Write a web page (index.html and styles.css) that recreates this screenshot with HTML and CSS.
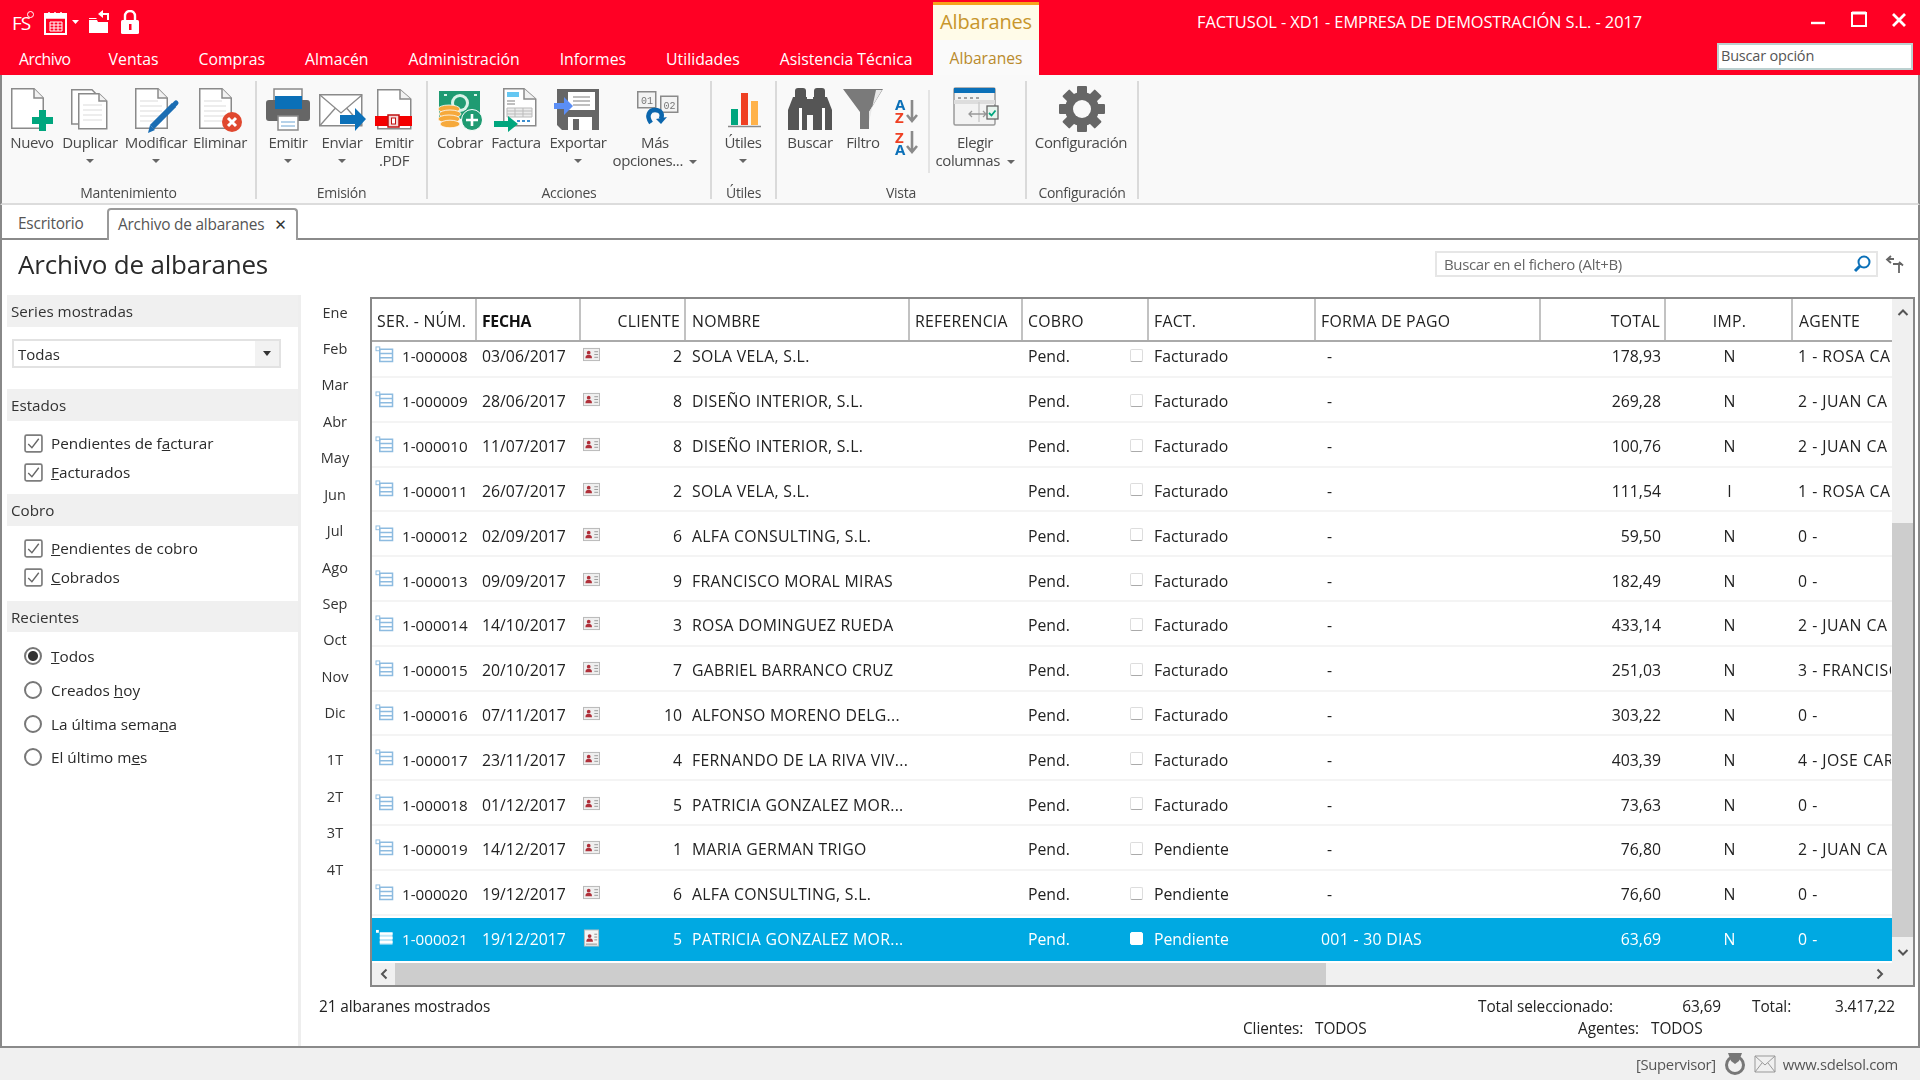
FILE: index.html
```html
<!DOCTYPE html>
<html lang="es">
<head>
<meta charset="utf-8">
<title>FACTUSOL</title>
<link rel="stylesheet" href="styles.css">
</head>
<body>
<svg class="defs" width="0" height="0">
  <symbol id="rowlist" viewBox="0 0 20 18"><rect x="1" y="1" width="4" height="4" fill="#fff" stroke="#8dbbe0"/><path d="M5 3.5h13.5v13H5z M5 8h13.5 M5 12.5h13.5" fill="none" stroke="#8dbbe0" stroke-width="1.6"/></symbol>
  <symbol id="rowlistw" viewBox="0 0 20 18"><rect x="1" y="1" width="3" height="3" fill="#fff"/><path d="M5 3.5h13.5v13H5z" fill="#bfe6f7"/><path d="M5 5h13.5M5 9.5h13.5M5 14h13.5" stroke="#fff" stroke-width="2.4"/></symbol>
  <symbol id="card" viewBox="0 0 18 16"><rect x=".5" y="1.5" width="17" height="13" fill="#efefef" stroke="#b5b5b5"/><circle cx="6" cy="6" r="2" fill="#b0303a"/><path d="M2.5 12c0-3 1.500-3.500 3.500-3.500s3.500 .5 3.500 3.500z" fill="#b0303a"/><path d="M12 5h4M12 8h4M12 11h4" stroke="#999"/></symbol>
  <symbol id="cardw" viewBox="0 0 18 18"><rect x="1.500" y=".5" width="15" height="17" fill="#f4f4f4" stroke="#bbb"/><circle cx="7" cy="7" r="2" fill="#b0303a"/><path d="M3.500 13c0-3 1.500-3.500 3.500-3.500s3.500 .5 3.500 3.500z" fill="#b0303a"/><path d="M12 5h3M12 8h3M12 11h3M3 15.500h12" stroke="#888"/></symbol>
  <symbol id="check" viewBox="0 0 18 18"><rect x="1" y="1" width="16" height="16" rx="1.500" fill="#fff" stroke="#7d7d7d" stroke-width="1.600"/><path d="M4 9.500l3.500 3.500 6.500-8.500" fill="none" stroke="#666" stroke-width="1.300"/></symbol>
  <symbol id="docp" viewBox="0 0 60 48"><path d="M9.750 2.750H32L41.250 12V42.250H9.750z" fill="#fff" stroke="#8a8a8a" stroke-width="1.500"/><path d="M32 2.750V12H41.250" fill="#f2f2f2" stroke="#8a8a8a" stroke-width="1.500"/></symbol>
  <symbol id="lines" viewBox="0 0 60 48"><path d="M14 15h18M14 20h22M14 25h22M14 30h22M14 35h22" stroke="#dcdcdc" stroke-width="1.200"/></symbol>
</svg>

<div class="app">
  <header class="head">
    <div class="titlebar">
      <div class="quick">
        <span class="fs">FS</span>
        <svg class="qi-cal" width="36" height="24" viewBox="0 0 36 24"><path d="M2 3h21v20H2z" fill="none" stroke="#fff" stroke-width="2"/><path d="M2 3h21v4H2z M6 1v4M12 1v4M18 1v4" fill="#fff" stroke="#fff" stroke-width="1.500"/><path d="M7 11h12v9H7z M7 14h12M7 17h12M11 11v9M15 11v9" fill="none" stroke="#fff"/><path d="M29 9h7l-3.500 4z" fill="#fff"/></svg>
        <svg class="qi-folder" width="24" height="24" viewBox="0 0 24 24"><path d="M1 10h8l1 2h10v11H1z" fill="#fff"/><path d="M1 8h7l1 1H1z" fill="#fff"/><path d="M20 10V4h-7" fill="none" stroke="#fff" stroke-width="2"/><path d="M15 0v8l-5-4z" fill="#fff"/></svg>
        <svg class="qi-lock" width="18" height="24" viewBox="0 0 18 24"><path d="M4 11V6a5 5 0 0 1 10 0v5" fill="none" stroke="#fff" stroke-width="2.400"/><rect x="0" y="10" width="18" height="14" rx="1.500" fill="#fff"/><rect x="8" y="14" width="2.500" height="6" fill="#ff0024"/></svg>
      </div>
      <div class="ctx-title">Albaranes</div>
      <div class="apptitle">FACTUSOL - XD1 - EMPRESA DE DEMOSTRACIÓN S.L. - 2017</div>
      <div class="winbtns">
        <svg width="96" height="20" viewBox="0 0 96 20"><path d="M0 13h14" stroke="#fff" stroke-width="2.400"/><path d="M41 3h14v13H41z" fill="none" stroke="#fff" stroke-width="2"/><path d="M41 3h14" stroke="#fff" stroke-width="3"/><path d="M82 4l12 12M94 4L82 16" stroke="#fff" stroke-width="2.800"/></svg>
      </div>
    </div>
    <div class="menubar">
      <div class="menu-items">
        <span class="mi mi-first">Archivo</span>
        <span class="mi">Ventas</span>
        <span class="mi">Compras</span>
        <span class="mi">Almacén</span>
        <span class="mi">Administración</span>
        <span class="mi">Informes</span>
        <span class="mi">Utilidades</span>
        <span class="mi">Asistencia Técnica</span>
      </div>
      <span class="mi-ctx">Albaranes</span>
      <span class="menu-search">Buscar opción</span>
    </div>
  </header>

  <section class="ribbon">
    <div class="group g1">
      <div class="btns">
        <div class="rb w56"><svg class="ri" viewBox="0 0 60 48"><use href="#docp"/><path d="M37 24h7v7h7v7h-7v7h-7v-7h-7v-7h7z" fill="#00a67e"/></svg><span class="rl">Nuevo</span></div>
        <div class="rb w60"><svg class="ri" viewBox="0 0 60 48"><path d="M11.750 3.750H32L39 11V38H11.750z" fill="#fff" stroke="#8a8a8a" stroke-width="1.500"/><path d="M18.750 7.750H39L46.750 15V42.750H18.750z" fill="#fff" stroke="#8a8a8a" stroke-width="1.500"/><path d="M39 7.750V15H46.750" fill="#f2f2f2" stroke="#8a8a8a" stroke-width="1.500"/><path d="M23 19h19M23 24h19M23 29h19M23 34h19" stroke="#dcdcdc" stroke-width="1.200"/></svg><span class="rl">Duplicar</span><span class="caret"></span></div>
        <div class="rb w72"><svg class="ri" viewBox="0 0 60 48"><use href="#docp"/><use href="#lines"/><path d="M26 41L48 19" stroke="#1a6db3" stroke-width="6"/><path d="M48 19l2-2" stroke="#1a6db3" stroke-width="5" stroke-linecap="round"/><path d="M22 47l2-8 5 5z" fill="#1a6db3"/></svg><span class="rl">Modificar</span><span class="caret"></span></div>
        <div class="rb w56"><svg class="ri" viewBox="0 0 60 48"><use href="#docp"/><use href="#lines"/><circle cx="42" cy="36" r="10" fill="#e0482f"/><path d="M38 32l8 8M46 32l-8 8" stroke="#fff" stroke-width="3"/></svg><span class="rl">Eliminar</span></div>
      </div>
      <div class="glabel">Mantenimiento</div>
    </div>
    <div class="group g2">
      <div class="btns">
        <div class="rb w52"><svg class="ri" viewBox="0 0 60 48"><path d="M16 3h28v12H16z" fill="#fff" stroke="#8a8a8a" stroke-width="1.500"/><path d="M8 17a3 3 0 0 1 3-3h38a3 3 0 0 1 3 3v15a3 3 0 0 1-3 3H11a3 3 0 0 1-3-3z" fill="#666"/><path d="M17 10h27v13H17z" fill="#0b70b8"/><path d="M20 30h20v14H20z" fill="#fff" stroke="#8a8a8a" stroke-width="1.500"/><path d="M23 36h14M23 40h14" stroke="#9fc4e2" stroke-width="1.500"/></svg><span class="rl">Emitir</span><span class="caret"></span></div>
        <div class="rb w56"><svg class="ri" viewBox="0 0 60 48"><path d="M7.750 8.750h42v31h-42z" fill="#fff" stroke="#8a8a8a" stroke-width="1.500"/><path d="M8 9l21 18L50 9M8 39.500l15-17M50 39.500l-15-17" fill="none" stroke="#8a8a8a" stroke-width="1.300"/><path d="M28 29h15v-7l11 11-11 12v-7H28z" fill="#0b70b8"/></svg><span class="rl">Enviar</span><span class="caret"></span></div>
        <div class="rb w48"><svg class="ri" viewBox="0 0 60 48"><path d="M13.750 3.750H36L46.750 13V42.750H13.750z" fill="#fff" stroke="#8a8a8a" stroke-width="1.500"/><path d="M36 3.750V13H46.750" fill="#f2f2f2" stroke="#8a8a8a" stroke-width="1.500"/><path d="M11 30h37v10H11z" fill="#f40000"/><rect x="24" y="29" width="11" height="12" fill="#f5d5d5" stroke="#c01010" stroke-width="1.500"/><rect x="27.500" y="32" width="4" height="6" fill="#fff" stroke="#c01010"/></svg><span class="rl">Emitir<br>.PDF</span></div>
      </div>
      <div class="glabel">Emisión</div>
    </div>
    <div class="group g3">
      <div class="btns">
        <div class="rb w52"><svg class="ri" viewBox="0 0 60 48"><path d="M9 5h41v28H9z" fill="#1f9b72"/><circle cx="30" cy="17" r="9" fill="#d9f2e8"/><circle cx="30" cy="17" r="6" fill="#1f9b72"/><path d="M14 9l3 0M47 9l-3 0" stroke="#d9f2e8" stroke-width="2"/><g fill="#f6a93b" stroke="#fff" stroke-width=".8"><ellipse cx="19" cy="23" rx="11" ry="4"/><ellipse cx="20" cy="28" rx="11" ry="4"/><ellipse cx="19" cy="33" rx="11" ry="4"/><ellipse cx="20" cy="38" rx="10" ry="3.800"/></g><circle cx="42" cy="34" r="10.500" fill="#1f9b72" stroke="#fff"/><path d="M36 34h12M42 28v12" stroke="#fff" stroke-width="2.600"/></svg><span class="rl">Cobrar</span></div>
        <div class="rb w60"><svg class="ri" viewBox="0 0 60 48"><path d="M17.750 2.750H38L49.750 13V39.750H17.750z" fill="#fff" stroke="#8a8a8a" stroke-width="1.500"/><path d="M38 2.750V13H49.750" fill="#f2f2f2" stroke="#8a8a8a" stroke-width="1.500"/><path d="M21 6h12v5H21z" fill="#65c7f2"/><path d="M21 15h8M21 18h8" stroke="#aaa" stroke-width="1.300"/><path d="M21 22h25v9H21z" fill="#ececec" stroke="#bbb"/><path d="M21 25h25M21 28h25M29 22v9M37 22v9" stroke="#bbb"/><path d="M31 35h15" stroke="#3d8fd0" stroke-width="2" stroke-dasharray="3 2"/><path d="M8 38h14v-5l10 8-10 8v-5H8z" fill="#00a67e" transform="translate(0 -3)"/></svg><span class="rl">Factura</span></div>
        <div class="rb w64"><svg class="ri" viewBox="0 0 60 48"><path d="M9 3h42v41H14l-5-5z" fill="#666"/><path d="M20 6h27v18H20z" fill="#fff"/><path d="M25 11h17M25 15h17M25 19h17" stroke="#aaa" stroke-width="1.300"/><path d="M20 31h24v13H20z" fill="#fff"/><path d="M25 33h6v11h-6z" fill="#666"/><path d="M6 17h10v-6l9 9-9 9v-6H6z" fill="#5b8ef5"/></svg><span class="rl">Exportar</span><span class="caret"></span></div>
        <div class="rb w90"><svg class="ri" viewBox="0 0 60 48"><rect x="12.750" y="5.750" width="18" height="16" fill="#f3f3f3" stroke="#8a8a8a" stroke-width="1.500"/><text class="mono" x="16" y="18">01</text><rect x="35.750" y="10.250" width="17" height="16" fill="#f3f3f3" stroke="#8a8a8a" stroke-width="1.500"/><text class="mono" x="38.500" y="23">02</text><path d="M26 37c-5-7-2-13 4-13s8 4 6 9" fill="none" stroke="#0b66ad" stroke-width="4.500"/><path d="M31 33l5 5 6-7z" fill="#0b66ad"/></svg><span class="rl">Más<br>opciones... <span class="caret-in"></span></span></div>
      </div>
      <div class="glabel">Acciones</div>
    </div>
    <div class="group g4">
      <div class="btns">
        <div class="rb w46"><svg class="ri" viewBox="0 0 60 48"><path d="M18 23h7v16h-7z" fill="#00a67e"/><path d="M28 7h7v32h-7z" fill="#ef4023"/><path d="M38 15h7v24h-7z" fill="#ffb24a"/><path d="M15 40.500h33" stroke="#8a8a8a" stroke-width="1.500"/></svg><span class="rl">Útiles</span><span class="caret"></span></div>
      </div>
      <div class="glabel">Útiles</div>
    </div>
    <div class="group g5">
      <div class="btns">
        <div class="rb w52"><svg class="ri" viewBox="0 0 60 48"><g fill="#555"><rect x="15" y="2" width="11" height="14" rx="3"/><rect x="34" y="2" width="11" height="14" rx="3"/><path d="M13 11h14v33H8V24z"/><path d="M33 11h14l5 13v20H33z"/><path d="M27 13h6v16h-6z"/></g><path d="M19 22h3v22h-3zM42 22h3v22h-3z" fill="#fff"/></svg><span class="rl">Buscar</span></div>
        <div class="rb w54"><svg class="ri" viewBox="0 0 60 48"><path d="M10 3h40L36 26v17h-9V26z" fill="#7a7a7a"/><path d="M43 4h6L36 26v10z" fill="#e8e8e8"/></svg><span class="rl">Filtro</span></div>
        <div class="rb w30 az"><svg width="30" height="68" viewBox="0 0 30 68"><text class="azb" x="5" y="28">A</text><text class="azr" x="5" y="41">Z</text><path d="M22 18v21M17 33l5 6 5-6" fill="none" stroke="#8a8a8a" stroke-width="2.600"/><text class="azr" x="5" y="61">Z</text><text class="azb" x="5" y="73">A</text><path d="M22 49v21M17 64l5 6 5-6" fill="none" stroke="#8a8a8a" stroke-width="2.600"/></svg></div>
        <div class="rdiv"></div>
        <div class="rb w78"><svg class="ri" viewBox="0 0 60 48"><rect x="9" y="2" width="41" height="37" rx="1.500" fill="#f3f3f3" stroke="#9a9a9a" stroke-width="1.500"/><path d="M9 2h41v5H9z" fill="#0b70b8"/><path d="M13 12h3M19 12h3M25 12h3M31 12h3" stroke="#888" stroke-width="1.500"/><path d="M9 16h41" stroke="#ddd" stroke-width="4"/><path d="M34 16v20" stroke="#ccc" stroke-width="1.500"/><path d="M24 28h17M27 25l-3 3 3 3M38 25l3 3-3 3" fill="none" stroke="#999" stroke-width="1.300"/><rect x="42" y="20" width="11" height="13" fill="#e8f4ee" stroke="#666" stroke-width="1.300"/><path d="M44 27l2.500 2.500 4-5" fill="none" stroke="#00a67e" stroke-width="1.800"/></svg><span class="rl">Elegir<br>columnas <span class="caret-in"></span></span></div>
      </div>
      <div class="glabel">Vista</div>
    </div>
    <div class="group g6">
      <div class="btns">
        <div class="rb w92"><svg class="ri" viewBox="0 0 60 48"><g transform="translate(31 23)" fill="#666"><circle r="17"/><rect x="-5" y="-23" width="10" height="46" rx="1"/><rect x="-5" y="-23" width="10" height="46" rx="1" transform="rotate(45)"/><rect x="-5" y="-23" width="10" height="46" rx="1" transform="rotate(90)"/><rect x="-5" y="-23" width="10" height="46" rx="1" transform="rotate(135)"/><circle r="9" fill="#f9f9f9"/></g></svg><span class="rl">Configuración</span></div>
      </div>
      <div class="glabel">Configuración</div>
    </div>
  </section>

  <nav class="tabs">
    <span class="tab-plain">Escritorio</span>
    <span class="tab-on">Archivo de albaranes <span class="tab-x">✕</span></span>
  </nav>

  <main class="page">
    <div class="page-head">
      <h1 class="page-title">Archivo de albaranes</h1>
      <div class="file-search">
        <span>Buscar en el fichero (Alt+B)</span>
        <svg width="20" height="20" viewBox="0 0 20 20"><circle cx="12" cy="8" r="5.500" fill="none" stroke="#0b70b8" stroke-width="2"/><path d="M8 12l-5 5" stroke="#0b70b8" stroke-width="3"/></svg>
      </div>
      <svg class="swap" width="22" height="22" viewBox="0 0 22 22"><path d="M10 6H4M7 3L3 6.500 7 10" fill="none" stroke="#666" stroke-width="1.800"/><path d="M9 11h9M15 9l4 3.500M15 11v9" fill="none" stroke="#666" stroke-width="1.800"/></svg>
    </div>
    <div class="page-body">
      <aside class="side">
        <div class="band">Series mostradas</div>
        <div class="select"><span class="select-text">Todas</span><span class="select-btn"><span class="caret-dark"></span></span></div>
        <div class="band band-2">Estados</div>
        <div class="opts">
          <label class="opt"><svg class="cb"><use href="#check"/></svg><span>Pendientes de f<u>a</u>cturar</span></label>
          <label class="opt"><svg class="cb"><use href="#check"/></svg><span><u>F</u>acturados</span></label>
        </div>
        <div class="band">Cobro</div>
        <div class="opts">
          <label class="opt"><svg class="cb"><use href="#check"/></svg><span><u>P</u>endientes de cobro</span></label>
          <label class="opt"><svg class="cb"><use href="#check"/></svg><span><u>C</u>obrados</span></label>
        </div>
        <div class="band band-r">Recientes</div>
        <div class="radios">
          <label class="radio"><span class="rd rd-on"></span><span><u>T</u>odos</span></label>
          <label class="radio"><span class="rd"></span><span>Creados <u>h</u>oy</span></label>
          <label class="radio"><span class="rd"></span><span>La última sema<u>n</u>a</span></label>
          <label class="radio"><span class="rd"></span><span>El último m<u>e</u>s</span></label>
        </div>
      </aside>
      <div class="main-col">
        <div class="upper">
          <div class="months">
            <span>Ene</span><span>Feb</span><span>Mar</span><span>Abr</span><span>May</span><span>Jun</span><span>Jul</span><span>Ago</span><span>Sep</span><span>Oct</span><span>Nov</span><span>Dic</span>
            <span class="q1">1T</span><span>2T</span><span>3T</span><span>4T</span>
          </div>
          <div class="gridbox">
            <div class="gridleft">
              <div class="row hdr">
                <div class="c">SER. - NÚM.</div><div class="c c-bold">FECHA</div><div class="c r">CLIENTE</div><div class="c">NOMBRE</div><div class="c">REFERENCIA</div><div class="c">COBRO</div><div class="c">FACT.</div><div class="c">FORMA DE PAGO</div><div class="c r">TOTAL</div><div class="c m">IMP.</div><div class="c">AGENTE</div>
              </div>
              <div class="rows">
                <div class="row first"><div class="c ser"><svg class="i1"><use href="#rowlist"/></svg>1-000008</div><div class="c">03/06/2017</div><div class="c cli"><svg class="i2"><use href="#card"/></svg>2</div><div class="c">SOLA VELA, S.L.</div><div class="c"></div><div class="c cob">Pend.<span class="box"></span></div><div class="c">Facturado</div><div class="c dash">-</div><div class="c r">178,93</div><div class="c m">N</div><div class="c">1 - ROSA CA</div></div>
                <div class="row"><div class="c ser"><svg class="i1"><use href="#rowlist"/></svg>1-000009</div><div class="c">28/06/2017</div><div class="c cli"><svg class="i2"><use href="#card"/></svg>8</div><div class="c">DISEÑO INTERIOR, S.L.</div><div class="c"></div><div class="c cob">Pend.<span class="box"></span></div><div class="c">Facturado</div><div class="c dash">-</div><div class="c r">269,28</div><div class="c m">N</div><div class="c">2 - JUAN CA</div></div>
                <div class="row"><div class="c ser"><svg class="i1"><use href="#rowlist"/></svg>1-000010</div><div class="c">11/07/2017</div><div class="c cli"><svg class="i2"><use href="#card"/></svg>8</div><div class="c">DISEÑO INTERIOR, S.L.</div><div class="c"></div><div class="c cob">Pend.<span class="box"></span></div><div class="c">Facturado</div><div class="c dash">-</div><div class="c r">100,76</div><div class="c m">N</div><div class="c">2 - JUAN CA</div></div>
                <div class="row"><div class="c ser"><svg class="i1"><use href="#rowlist"/></svg>1-000011</div><div class="c">26/07/2017</div><div class="c cli"><svg class="i2"><use href="#card"/></svg>2</div><div class="c">SOLA VELA, S.L.</div><div class="c"></div><div class="c cob">Pend.<span class="box"></span></div><div class="c">Facturado</div><div class="c dash">-</div><div class="c r">111,54</div><div class="c m">I</div><div class="c">1 - ROSA CA</div></div>
                <div class="row"><div class="c ser"><svg class="i1"><use href="#rowlist"/></svg>1-000012</div><div class="c">02/09/2017</div><div class="c cli"><svg class="i2"><use href="#card"/></svg>6</div><div class="c">ALFA CONSULTING, S.L.</div><div class="c"></div><div class="c cob">Pend.<span class="box"></span></div><div class="c">Facturado</div><div class="c dash">-</div><div class="c r">59,50</div><div class="c m">N</div><div class="c">0 -</div></div>
                <div class="row"><div class="c ser"><svg class="i1"><use href="#rowlist"/></svg>1-000013</div><div class="c">09/09/2017</div><div class="c cli"><svg class="i2"><use href="#card"/></svg>9</div><div class="c">FRANCISCO MORAL MIRAS</div><div class="c"></div><div class="c cob">Pend.<span class="box"></span></div><div class="c">Facturado</div><div class="c dash">-</div><div class="c r">182,49</div><div class="c m">N</div><div class="c">0 -</div></div>
                <div class="row"><div class="c ser"><svg class="i1"><use href="#rowlist"/></svg>1-000014</div><div class="c">14/10/2017</div><div class="c cli"><svg class="i2"><use href="#card"/></svg>3</div><div class="c">ROSA DOMINGUEZ RUEDA</div><div class="c"></div><div class="c cob">Pend.<span class="box"></span></div><div class="c">Facturado</div><div class="c dash">-</div><div class="c r">433,14</div><div class="c m">N</div><div class="c">2 - JUAN CA</div></div>
                <div class="row"><div class="c ser"><svg class="i1"><use href="#rowlist"/></svg>1-000015</div><div class="c">20/10/2017</div><div class="c cli"><svg class="i2"><use href="#card"/></svg>7</div><div class="c">GABRIEL BARRANCO CRUZ</div><div class="c"></div><div class="c cob">Pend.<span class="box"></span></div><div class="c">Facturado</div><div class="c dash">-</div><div class="c r">251,03</div><div class="c m">N</div><div class="c">3 - FRANCISCO</div></div>
                <div class="row"><div class="c ser"><svg class="i1"><use href="#rowlist"/></svg>1-000016</div><div class="c">07/11/2017</div><div class="c cli"><svg class="i2"><use href="#card"/></svg>10</div><div class="c">ALFONSO MORENO DELG...</div><div class="c"></div><div class="c cob">Pend.<span class="box"></span></div><div class="c">Facturado</div><div class="c dash">-</div><div class="c r">303,22</div><div class="c m">N</div><div class="c">0 -</div></div>
                <div class="row"><div class="c ser"><svg class="i1"><use href="#rowlist"/></svg>1-000017</div><div class="c">23/11/2017</div><div class="c cli"><svg class="i2"><use href="#card"/></svg>4</div><div class="c">FERNANDO DE LA RIVA VIV...</div><div class="c"></div><div class="c cob">Pend.<span class="box"></span></div><div class="c">Facturado</div><div class="c dash">-</div><div class="c r">403,39</div><div class="c m">N</div><div class="c">4 - JOSE CAR</div></div>
                <div class="row"><div class="c ser"><svg class="i1"><use href="#rowlist"/></svg>1-000018</div><div class="c">01/12/2017</div><div class="c cli"><svg class="i2"><use href="#card"/></svg>5</div><div class="c">PATRICIA GONZALEZ MOR...</div><div class="c"></div><div class="c cob">Pend.<span class="box"></span></div><div class="c">Facturado</div><div class="c dash">-</div><div class="c r">73,63</div><div class="c m">N</div><div class="c">0 -</div></div>
                <div class="row"><div class="c ser"><svg class="i1"><use href="#rowlist"/></svg>1-000019</div><div class="c">14/12/2017</div><div class="c cli"><svg class="i2"><use href="#card"/></svg>1</div><div class="c">MARIA GERMAN TRIGO</div><div class="c"></div><div class="c cob">Pend.<span class="box"></span></div><div class="c">Pendiente</div><div class="c dash">-</div><div class="c r">76,80</div><div class="c m">N</div><div class="c">2 - JUAN CA</div></div>
                <div class="row"><div class="c ser"><svg class="i1"><use href="#rowlist"/></svg>1-000020</div><div class="c">19/12/2017</div><div class="c cli"><svg class="i2"><use href="#card"/></svg>6</div><div class="c">ALFA CONSULTING, S.L.</div><div class="c"></div><div class="c cob">Pend.<span class="box"></span></div><div class="c">Pendiente</div><div class="c dash">-</div><div class="c r">76,60</div><div class="c m">N</div><div class="c">0 -</div></div>
                <div class="row sel"><div class="c ser"><svg class="i1"><use href="#rowlistw"/></svg>1-000021</div><div class="c">19/12/2017</div><div class="c cli"><svg class="i2 i2-sel"><use href="#cardw"/></svg>5</div><div class="c">PATRICIA GONZALEZ MOR...</div><div class="c"></div><div class="c cob">Pend.<span class="box box-on"></span></div><div class="c">Pendiente</div><div class="c">001 - 30 DIAS</div><div class="c r">63,69</div><div class="c m">N</div><div class="c">0 -</div></div>
              </div>
              <div class="hscroll">
                <span class="sbtn"><svg width="10" height="12" viewBox="0 0 10 12"><path d="M7.500 1.500L3 6l4.500 4.500" fill="none" stroke="#555" stroke-width="2"/></svg></span>
                <span class="hthumb"></span>
                <span class="sbtn sbtn-end"><svg width="10" height="12" viewBox="0 0 10 12"><path d="M2.500 1.500L7 6l-4.500 4.500" fill="none" stroke="#555" stroke-width="2"/></svg></span>
              </div>
            </div>
            <div class="vscroll">
              <span class="vbtn"><svg width="12" height="10" viewBox="0 0 12 10"><path d="M1.500 7L6 2.500 10.500 7" fill="none" stroke="#555" stroke-width="2"/></svg></span>
              <span class="vthumb"></span>
              <span class="vbtn"><svg width="12" height="10" viewBox="0 0 12 10"><path d="M1.500 3L6 7.500 10.500 3" fill="none" stroke="#555" stroke-width="2"/></svg></span>
            </div>
          </div>
        </div>
        <div class="foot">
          <div class="foot-row">
            <span class="f-a">21 albaranes mostrados</span><span class="f-b">Total seleccionado:</span><span class="f-c">63,69</span><span class="f-d">Total:</span><span class="f-e">3.417,22</span>
          </div>
          <div class="foot-row foot-2">
            <span class="f-g">Clientes:</span><span class="f-h">TODOS</span><span class="f-i">Agentes:</span><span>TODOS</span>
          </div>
        </div>
      </div>
    </div>
  </main>

  <footer class="status">
    <span>[Supervisor]</span>
    <svg class="st-shield" width="22" height="24" viewBox="0 0 22 24"><circle cx="11" cy="13" r="8.500" fill="none" stroke="#777" stroke-width="3"/><path d="M4 1h14l-3 8-4 3-4-3z" fill="#777"/></svg>
    <svg class="st-mail" width="22" height="18" viewBox="0 0 22 18"><path d="M1 1h20v16H1z M1 1l10 9L21 1M1 17l7-9M21 17l-7-9" fill="none" stroke="#999"/></svg>
    <span>www.sdelsol.com</span>
  </footer>
</div>
</body>
</html>
```
FILE: styles.css
```css
* { box-sizing: border-box; }
html, body { margin: 0; padding: 0; }
body {
  width: 1920px; height: 1080px; overflow: hidden;
  font-family: "Open Sans", "Noto Sans", sans-serif;
  font-size: 14.5px; color: #2a2a2a; background: #fff;
}
.defs { position: absolute; }
.app { width: 1920px; height: 1080px; display: flex; flex-direction: column; filter: blur(.5px); }

/* header */
.head { height: 75px; background: #ff0024; color: #fff; flex: none; }
.titlebar { height: 40px; display: flex; }
.quick { width: 933px; flex: none; display: flex; align-items: flex-start; padding-top: 10px; }
.fs { font-size: 19px; line-height: 22px; margin: 2px 0 0 12px; width: 31px; letter-spacing: -1px; position: relative; flex: none; }
.fs::after { content: ""; position: absolute; left: 15px; top: -1px; width: 5px; height: 5px; border: 1px solid #fff; border-radius: 50%; }
.qi-cal { margin: 1px 0 0 0; flex: none; }
.qi-folder { margin: 0 0 0 9px; flex: none; }
.qi-lock { margin: 0 0 0 9px; flex: none; }
.ctx-title {
  width: 106px; flex: none; height: 38px; margin-top: 2px; background: #fffbe8; border-top: 3px solid #f7a21b;
  color: #c8962c; font-size: 20px; line-height: 33px; text-align: center; letter-spacing: -.15px;
}
.apptitle { width: 445px; flex: none; margin-left: 158px; font-size: 16.4px; line-height: 44px; white-space: nowrap; letter-spacing: -.08px; }
.winbtns { flex: none; margin-left: 169px; padding-top: 10px; }
.menubar { height: 35px; display: flex; align-items: center; position: relative; }
.menu-items { width: 933px; flex: none; display: flex; align-items: center; padding-left: 19px; }
.mi { margin-right: 40px; font-size: 15.8px; white-space: nowrap; position: relative; top: 1px; flex: none; }
.mi-first { margin-right: 38px; letter-spacing: -.5px; }
.mi-ctx { width: 106px; flex: none; height: 35px; background: #fafafa; color: #b98a2c; text-align: center; line-height: 37px; font-size: 15.6px; }
.menu-search {
  position: absolute; left: 1717px; top: 3px; width: 196px; height: 27px; background: #fff;
  border: 2px solid #bcd0d0; color: #555; font-size: 14.500px; line-height: 21px; padding-left: 2px; letter-spacing: -.2px;
}

/* ribbon */
.ribbon { height: 130px; flex: none; display: flex; background: #f9f9f9; padding: 6px 0 4px; border-bottom: 2px solid #dcdcdc; border-left: 2px solid #888; border-right: 2px solid #888; }
.group { display: flex; flex-direction: column; padding-top: 5px; border-right: 2px solid #dadada; color: #4a4a4a; flex: none; }
.g1 { width: 255px; } .g1 .btns { padding-left: 2px; }
.g2 { width: 171px; } .g2 .btns { padding-left: 5px; }
.g3 { width: 284px; } .g3 .btns { padding-left: 6px; }
.g4 { width: 65px; } .g4 .btns { padding-left: 8px; }
.g5 { width: 250px; } .g5 .btns { padding-left: 7px; }
.g6 { width: 112px; } .g6 .btns { padding-left: 8px; }
.btns { flex: 1; display: flex; }
.glabel { height: 12px; line-height: 12px; text-align: center; font-size: 14px; letter-spacing: -.3px; white-space: nowrap; }
.rb { display: flex; flex-direction: column; align-items: center; flex: none; position: relative; }
.w30 { width: 30px; } .w46 { width: 46px; } .w48 { width: 48px; } .w52 { width: 52px; } .w54 { width: 54px; }
.w56 { width: 56px; } .w60 { width: 60px; } .w64 { width: 64px; } .w72 { width: 72px; } .w78 { width: 78px; }
.w90 { width: 90px; } .w92 { width: 92px; }
.ri { width: 60px; height: 48px; flex: none; overflow: visible; }
.rl { font-size: 15px; line-height: 18px; margin-top: -1px; text-align: center; white-space: nowrap; letter-spacing: -.4px; }
.caret, .caret-in { display: inline-block; width: 0; height: 0; border-left: 4px solid transparent; border-right: 4px solid transparent; border-top: 4px solid #666; }
.caret { margin-top: 8px; }
.caret-in { vertical-align: 2px; margin-left: 3px; }
.rdiv { width: 2px; height: 83px; margin: 4px 6px 0 8px; background: #e4e4e4; flex: none; }
.az svg { overflow: visible; margin-top: -4px; }
.azb, .azr { font: bold 15px "Open Sans", sans-serif; }
.azb { fill: #0b70b8; } .azr { fill: #ef4023; }
.mono { font: 10px "Liberation Mono", monospace; fill: #777; }

/* tabs */
.tabs { height: 35px; flex: none; display: flex; align-items: flex-end; background: #fff; border-bottom: 2px solid #8a8a8a; border-left: 2px solid #888; border-right: 2px solid #888; position: relative; }
.tab-plain { width: 105px; padding-left: 16px; line-height: 28px; color: #555; font-size: 15.4px; letter-spacing: -.2px; }
.tab-on {
  width: 191px; height: 32px; margin-bottom: -2px; background: #fff; border: 2px solid #9a9a9a; border-bottom: 0;
  border-radius: 4px 4px 0 0; padding-left: 9px; line-height: 29px; color: #555; font-size: 15.4px; letter-spacing: -.2px; white-space: nowrap;
}
.tab-x { color: #333; margin-left: 6px; font-size: 15px; font-family: "DejaVu Sans", sans-serif; }

/* page */
.page { flex: 1; min-height: 0; display: flex; flex-direction: column; border-left: 2px solid #888; border-right: 2px solid #888; }
.page-head { height: 55px; flex: none; display: flex; align-items: flex-start; }
.page-title { margin: 4px 0 0 16px; font-weight: 400; font-size: 26px; line-height: 40px; color: #2a2a2a; width: 1417px; flex: none; white-space: nowrap; letter-spacing: -.2px; }
.file-search {
  width: 443px; flex: none; height: 26px; margin-top: 11px; border: 2px solid #e6e6e6; background: #fff; display: flex; align-items: center;
  justify-content: space-between; padding: 0 4px 0 7px; color: #666; font-size: 15px; letter-spacing: -.35px;
}
.swap { margin: 13px 0 0 6px; flex: none; }
.page-body { flex: 1; min-height: 0; display: flex; }

/* side */
.side { width: 299px; flex: none; padding-left: 5px; border-right: 3px solid #eee; }
.band { width: 291px; height: 32px; background: #f0f0f0; padding-left: 4px; line-height: 33px; font-size: 15.2px; color: #333; }
.band-2 { margin-top: 21px; }
.band-r { height: 31px; margin-top: 2px; line-height: 33px; }
.select { width: 269px; height: 29px; margin: 12px 0 0 5px; border: 2px solid #e2e2e2; display: flex; background: #fff; }
.select-text { flex: 1; padding-left: 4px; line-height: 26px; font-size: 15px; }
.select-btn { width: 24px; background: #f2f2f2; display: flex; align-items: center; justify-content: center; }
.caret-dark { width: 0; height: 0; border-left: 4px solid transparent; border-right: 4px solid transparent; border-top: 5px solid #333; }
.opts { padding: 7.500px 0; }
.opt { display: flex; align-items: center; height: 29px; padding-left: 17px; gap: 8px; font-size: 15.3px; }
.cb { width: 19px; height: 19px; flex: none; }
.radios { padding-top: 7.500px; }
.radio { display: flex; align-items: center; height: 33.700px; padding-left: 17px; gap: 9px; font-size: 15.3px; }
.rd { width: 18px; height: 18px; border-radius: 50%; border: 2px solid #777; background: #fff; flex: none; display: block; }
.rd-on { background: radial-gradient(circle, #333 0 4.500px, #fff 5.500px); }

/* main */
.main-col { flex: 1; min-width: 0; display: flex; flex-direction: column; }
.upper { display: flex; height: 692px; flex: none; }
.months { width: 66px; flex: none; display: flex; flex-direction: column; align-items: center; margin: -.5px 2px 0 1px; color: #333; }
.months span { height: 36.450px; line-height: 36.450px; flex: none; font-size: 14.500px; }
.months .q1 { margin-top: 10.700px; }
.gridbox { width: 1545px; height: 690px; margin-top: 2px; border: 2px solid #888; display: flex; flex: none; }
.gridleft { width: 1520px; flex: none; display: flex; flex-direction: column; }
.row { display: grid; grid-template-columns: 105px 104px 105px 224px 113px 126px 167px 225px 125px 127px 98px; height: 44.800px; border-bottom: 2px solid #f4f4f4; }
.c { padding: 11.400px 5px 0; line-height: 24px; white-space: nowrap; overflow: hidden; font-size: 15.8px; color: #222; }
.hdr { height: 43px; flex: none; border-bottom: 2px solid #aaa; }
.hdr .c { border-right: 2px solid #c2c2c2; padding: 9.500px 3px 0 5px; letter-spacing: .25px; }
.hdr .c:last-child { border-right: 0; padding-left: 6px; }
.hdr .r { padding-right: 4px; }
.hdr .c-bold { font-weight: 700; color: #111; letter-spacing: -.3px; }
.c:nth-child(4) { padding-left: 6px; }
.row:not(.hdr) .c:nth-child(4) { letter-spacing: .3px; }
.row:not(.hdr) .c:nth-child(11) { letter-spacing: .5px; }
.row:not(.hdr) .c:nth-child(8) { letter-spacing: .3px; }
.dash { padding-left: 11px; }
.r { text-align: right; }
.m { text-align: center; }
.rows { flex: 1; min-height: 0; overflow: hidden; }
.first { height: 36px; }
.first .c { padding-top: 2px; }
.ser { display: flex; align-items: center; gap: 8px; font-size: 15.2px; }
.c.ser { padding: 4px 5px 0 3px; }
.c.cli { padding: 4px 4px 0 2px; }
.c.cob { padding: 4px 6px 0 5px; }
.first .c.ser, .first .c.cli, .first .c.cob { height: 28px; padding-top: 0; }
.ser .i1, .cli .i2 { flex: none; }
.i1 { width: 19px; height: 17px; margin-top: -4px; }
.i2 { width: 17px; height: 15px; margin-top: -3px; }
.i2-sel { height: 18px; }
.cli { display: flex; align-items: center; justify-content: space-between; }
.cob { display: flex; align-items: center; justify-content: space-between; }
.box { width: 13px; height: 13px; border: 1.500px solid #ddd; border-bottom-color: #aaa; border-radius: 2px; background: #fff; margin-top: -2px; flex: none; }
.box-on { background: #fff; border-color: #fff; }
.row.sel { background: #00a9e2; border-bottom: 0; height: 43px; margin-top: 2px; }
.row.sel .c { color: #fff; padding-top: 9.600px; }
.row.sel .c.ser, .row.sel .c.cli, .row.sel .c.cob { padding-top: 0; }
.hscroll { height: 22px; margin-top: 1px; display: flex; background: #f0f0f0; flex: none; }
.sbtn { width: 23px; display: flex; align-items: center; justify-content: center; flex: none; }
.sbtn-end { margin-left: auto; width: 24px; }
.hthumb { width: 931px; background: #cdcdcd; flex: none; }
.vscroll { width: 21px; background: #f0f0f0; display: flex; flex-direction: column; flex: none; }
.vbtn { height: 28px; display: flex; align-items: center; justify-content: center; flex: none; }
.vbtn:last-child { margin-top: 1px; }
.vthumb { height: 414px; margin-top: 196px; background: #cdcdcd; flex: none; }

/* footer */
.foot { padding: 10px 0 0 18px; color: #222; }
.foot-row { display: flex; height: 20px; line-height: 20px; font-size: 15.4px; white-space: nowrap; letter-spacing: -.1px; }
.foot-2 { margin: 2px 0 0 924px; }
.f-a { width: 1159px; } .f-b { width: 134px; } .f-c { width: 109px; text-align: right; }
.f-d { width: 37px; margin-left: 31px; } .f-e { width: 106px; text-align: right; }
.f-g { width: 72px; } .f-h { width: 263px; } .f-i { width: 73px; }

.status { height: 34px; flex: none; background: #f0f0f0; border-top: 2px solid #8a8a8a; display: flex; align-items: center; justify-content: flex-end; padding-right: 22px; color: #555; font-size: 14.8px; letter-spacing: -.3px; }
.st-shield { margin: 0 8px 0 8px; }
.st-mail { margin-right: 7px; }
```
